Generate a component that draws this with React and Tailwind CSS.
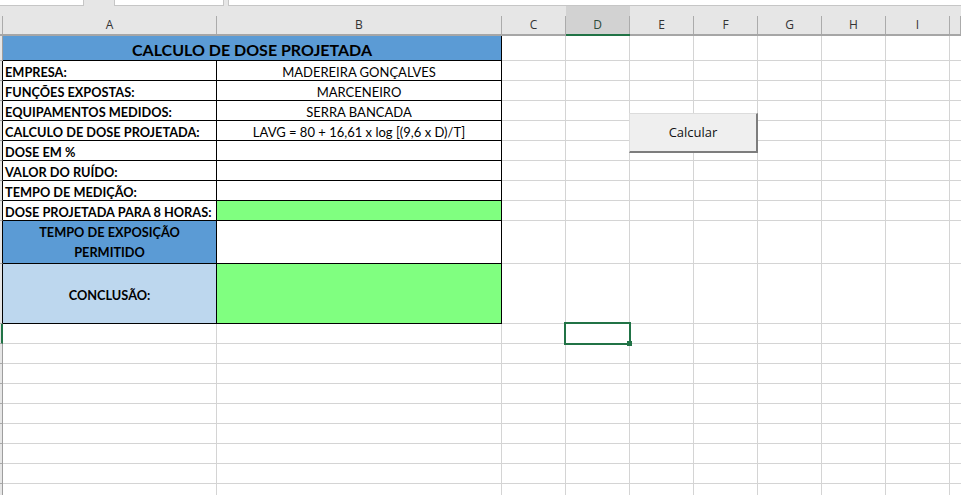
import React from "react";

const GRID =
  "grid grid-cols-[3px_214px_285px_64px_64px_64px_64px_64px_64px_64px_1fr]";

const LETTERS = ["A", "B", "C", "D", "E", "F", "G", "H", "I", ""];

function HeaderRow() {
  return (
    <div className={`${GRID} h-[30px] bg-[#e6e6e6]`}>
      <div className="flex border-b-2 border-[#a6a6a6]">
        <div className="flex-1" />
        <div className="w-px h-[18px] self-end bg-[#ababab]" />
      </div>
      {LETTERS.map((l, i) =>
        l === "D" ? (
          <div key={i} className="flex bg-[#d2d2d2] border-b-2 border-[#217346]">
            <div className="flex-1 flex items-center justify-center pt-[10px] text-[12px] text-[#2d4a3a]">
              {l}
            </div>
            <div className="w-px h-[18px] self-end bg-[#ababab]" />
          </div>
        ) : (
          <div key={i} className="flex border-b-2 border-[#a6a6a6]">
            <div className="flex-1 flex items-center justify-center pt-[10px] text-[12px] text-[#333]">
              {l}
            </div>
            <div className="w-px h-[18px] self-end bg-[#ababab]" />
          </div>
        )
      )}
    </div>
  );
}

function EmptyRest() {
  return (
    <>
      <div className="border-r border-b border-[#d4d4d4]" />
      <div className="border-r border-b border-[#d4d4d4]" />
      <div className="border-r border-b border-[#d4d4d4]" />
      <div className="border-r border-b border-[#d4d4d4]" />
      <div className="border-r border-b border-[#d4d4d4]" />
      <div className="border-r border-b border-[#d4d4d4]" />
      <div className="border-r border-b border-[#d4d4d4]" />
      <div className="border-b border-[#d4d4d4]" />
    </>
  );
}

function RowHead({ dark }) {
  return (
    <div
      className={
        dark
          ? "bg-[#e6e6e6] border-r border-b border-r-black border-b-[#a8a8a8]"
          : "bg-[#e6e6e6] border-r border-b border-r-[#9e9e9e] border-b-[#a8a8a8]"
      }
    />
  );
}

const rows = [
  ["EMPRESA:", "MADEREIRA GONÇALVES", ""],
  ["FUNÇÕES EXPOSTAS:", "MARCENEIRO", ""],
  ["EQUIPAMENTOS MEDIDOS:", "SERRA BANCADA", ""],
  ["CALCULO DE DOSE PROJETADA:", "LAVG = 80 + 16,61 x log [(9,6 x D)/T]", ""],
  ["DOSE EM %", "", ""],
  ["VALOR DO RUÍDO:", "", ""],
  ["TEMPO DE MEDIÇÃO:", "", ""],
  ["DOSE PROJETADA PARA 8 HORAS:", "", "green"],
];

export default function App() {
  return (
    <div className="relative w-[961px] h-[495px] overflow-hidden bg-white font-['Lato',sans-serif] text-black">
      {/* top strip */}
      <div className="flex h-[6px] bg-[#e6e6e6]">
        <div className="w-[84px] bg-white border-r border-b border-[#c6c6c6]" />
        <div className="w-[30px]" />
        <div className="w-[110px] bg-white border-l border-r border-b border-[#c6c6c6]" />
        <div className="w-[4px]" />
        <div className="flex-1 bg-white border-l border-b border-[#c6c6c6]" />
      </div>

      <div className="font-['Open_Sans',sans-serif]">
        <HeaderRow />
      </div>

      {/* title row */}
      <div className={`${GRID} h-[25px]`}>
        <RowHead />
        <div className="col-span-2 bg-[#5b9bd5] border-r border-b border-black flex items-end justify-center">
          <span className="text-[16px] font-bold leading-[20px] whitespace-nowrap">
            CALCULO DE DOSE PROJETADA
          </span>
        </div>
        <EmptyRest />
      </div>

      {rows.map(([label, value, kind], i) => (
        <div key={i} className={`${GRID} h-[20px]`}>
          <RowHead dark />
          <div className="border-r border-b border-black flex items-end pl-[2px] overflow-hidden">
            <span className="text-[12.75px] font-bold leading-[16px] whitespace-nowrap">
              {label}
            </span>
          </div>
          <div
            className={
              kind === "green"
                ? "bg-[#80ff80] border-r border-b border-black"
                : "border-r border-b border-black flex items-end justify-center overflow-hidden"
            }
          >
            {value ? (
              <span className="text-[13px] leading-[16px] whitespace-nowrap">
                {value}
              </span>
            ) : null}
          </div>
          <EmptyRest />
        </div>
      ))}

      {/* TEMPO DE EXPOSIÇÃO PERMITIDO */}
      <div className={`${GRID} h-[43px]`}>
        <RowHead dark />
        <div className="bg-[#5b9bd5] border-r border-b border-black flex items-end justify-center pb-[1px]">
          <span className="text-[12.75px] font-bold leading-[20px] text-center">
            TEMPO DE EXPOSIÇÃO
            <br />
            PERMITIDO
          </span>
        </div>
        <div className="border-r border-b border-black" />
        <EmptyRest />
      </div>

      {/* CONCLUSÃO */}
      <div className={`${GRID} h-[60px]`}>
        <RowHead dark />
        <div className="bg-[#bdd7ee] border-r border-b border-black flex items-center justify-center pt-[2px]">
          <span className="text-[12.75px] font-bold leading-[16px]">CONCLUSÃO:</span>
        </div>
        <div className="bg-[#80ff80] border-r border-b border-black" />
        <EmptyRest />
      </div>

      {/* empty rows */}
      <div className={`${GRID} h-[20px]`}>
        <div className="bg-[#e6e6e6] border-r-2 border-b border-r-[#217346] border-b-[#a8a8a8]" />
        <div className="border-r border-b border-[#d4d4d4]" />
        <div className="border-r border-b border-[#d4d4d4]" />
        <EmptyRest />
      </div>
      {[0, 1, 2, 3, 4, 5, 6, 7].map((i) => (
        <div key={i} className={`${GRID} h-[20px]`}>
          <RowHead />
          <div className="border-r border-b border-[#d4d4d4]" />
          <div className="border-r border-b border-[#d4d4d4]" />
          <EmptyRest />
        </div>
      ))}

      {/* Calcular button (floating control) */}
      <button className="absolute left-[629px] top-[113px] w-[129px] h-[40px] bg-[#efefef] border-t border-l border-t-[#dcdcdc] border-l-[#dcdcdc] border-r-2 border-b-2 border-r-[#7d7d7d] border-b-[#7d7d7d] flex items-center justify-center font-['Open_Sans',sans-serif] text-[13px] text-[#111]">
        Calcular
      </button>

      {/* selected cell */}
      <div className="absolute left-[564px] top-[322px] w-[67px] h-[23px] border-2 border-[#217346]" />
      <div className="absolute left-[627px] top-[341px] w-[5px] h-[5px] bg-[#217346]" />
    </div>
  );
}
